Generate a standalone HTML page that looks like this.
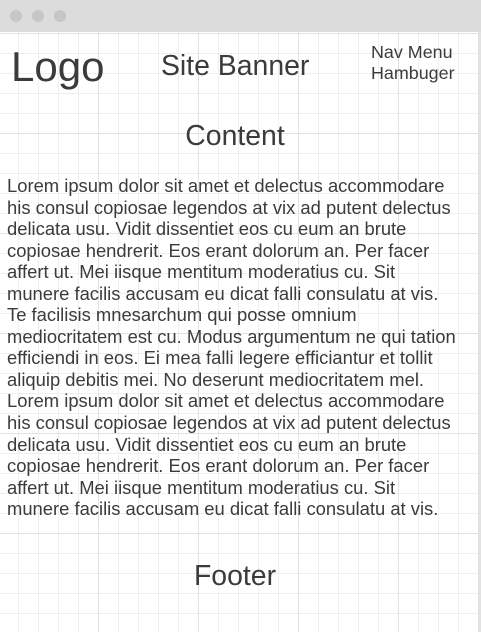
<!DOCTYPE html>
<html><head><style>
html,body{margin:0;padding:0}
body{width:481px;height:632px;position:relative;overflow:hidden;background:#fff;font-family:"Liberation Sans",sans-serif;color:#3b3b3b}
.grid{position:absolute;left:0;top:32px;width:481px;height:600px;
background-image:
linear-gradient(to right,#e2e2e2 0 1px,transparent 1px),
linear-gradient(to bottom,#e2e2e2 0 1px,transparent 1px),
linear-gradient(to right,#efefef 0 1px,transparent 1px),
linear-gradient(to bottom,#efefef 0 1px,transparent 1px);
background-size:100px 100px,100px 100px,20px 20px,20px 20px;
background-position:-2px 1px,-2px 1px,-2px 1px,-2px 1px}
.bar{position:absolute;left:0;top:0;width:481px;height:32px;background:#dcdcdc}
.dot{position:absolute;top:10px;width:12px;height:12px;border-radius:50%;background:#c6c6c6}
.rb{position:absolute;left:478px;top:32px;width:3px;height:600px;background:#e2e2e2}
.t{position:absolute;white-space:nowrap}
p{position:absolute;left:7px;top:175px;margin:0;font-size:18.4px;line-height:21.55px;white-space:nowrap}
</style></head><body>
<div class="grid"></div>
<div class="rb"></div>
<div class="bar"><div class="dot" style="left:10px"></div><div class="dot" style="left:32px"></div><div class="dot" style="left:54px"></div></div>
<div class="t" style="left:11px;top:43px;font-size:42px">Logo</div>
<div class="t" style="left:161px;top:50px;font-size:28.4px">Site Banner</div>
<div class="t" style="left:371px;top:42px;font-size:17.9px;line-height:21px">Nav Menu<br>Hambuger</div>
<div class="t" style="left:0;width:470px;text-align:center;top:120px;font-size:28.4px">Content</div>
<p>Lorem ipsum dolor sit amet et delectus accommodare<br>his consul copiosae legendos at vix ad putent delectus<br>delicata usu. Vidit dissentiet eos cu eum an brute<br>copiosae hendrerit. Eos erant dolorum an. Per facer<br>affert ut. Mei iisque mentitum moderatius cu. Sit<br>munere facilis accusam eu dicat falli consulatu at vis.<br>Te facilisis mnesarchum qui posse omnium<br>mediocritatem est cu. Modus argumentum ne qui tation<br>efficiendi in eos. Ei mea falli legere efficiantur et tollit<br>aliquip debitis mei. No deserunt mediocritatem mel.<br>Lorem ipsum dolor sit amet et delectus accommodare<br>his consul copiosae legendos at vix ad putent delectus<br>delicata usu. Vidit dissentiet eos cu eum an brute<br>copiosae hendrerit. Eos erant dolorum an. Per facer<br>affert ut. Mei iisque mentitum moderatius cu. Sit<br>munere facilis accusam eu dicat falli consulatu at vis.</p>
<div class="t" style="left:0;width:470px;text-align:center;top:560px;font-size:28.4px">Footer</div>
</body></html>
